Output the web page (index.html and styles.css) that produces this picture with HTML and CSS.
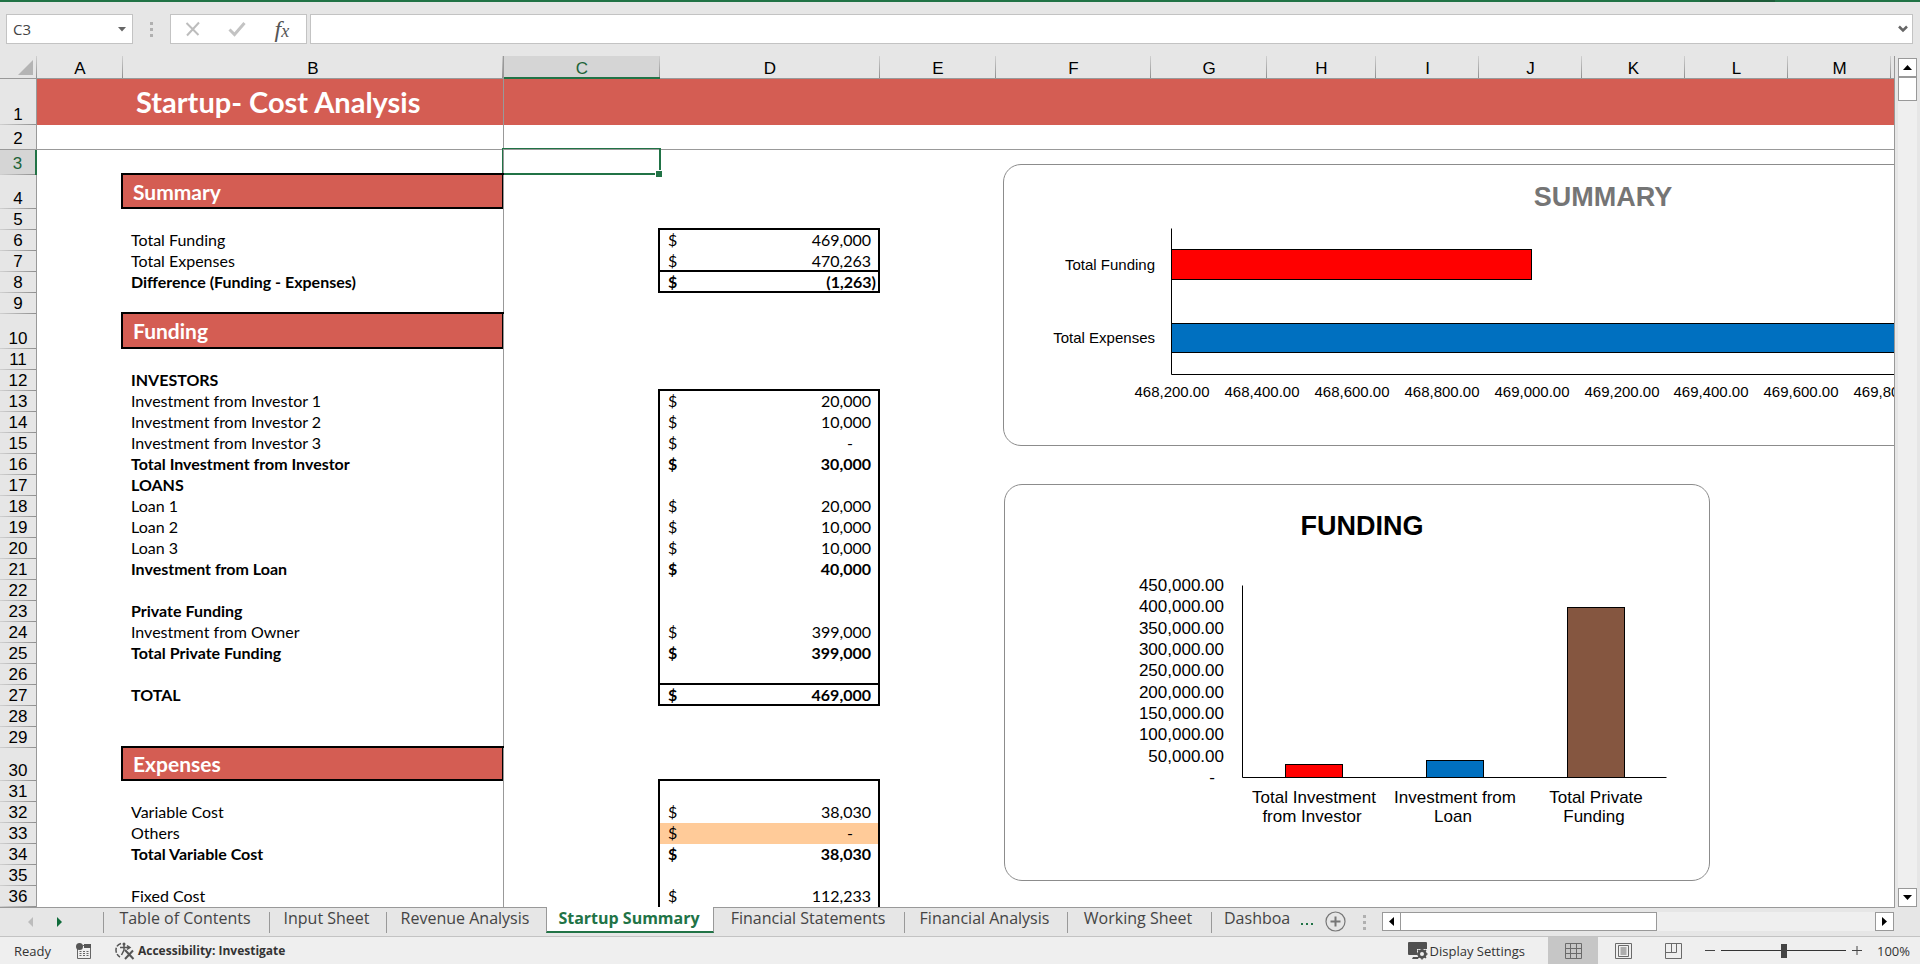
FILE: index.html
```html
<!DOCTYPE html>
<html lang="en">
<head>
<meta charset="utf-8">
<title>Startup- Cost Analysis</title>
<link rel="stylesheet" href="styles.css">
</head>
<body>
<div class="ribbon-edge"><span></span></div>

<header class="formula-bar">
  <div class="name-box">
    <input type="text" value="C3" aria-label="Name box">
    <button type="button" aria-label="Open name list"><svg width="8" height="5" viewBox="0 0 8 5"><path d="M0 0h8L4 4.500z" fill="#666"/></svg></button>
  </div>
  <span class="grip"><i></i><i></i><i></i></span>
  <div class="fx-buttons">
    <button type="button" aria-label="Cancel"><svg width="18" height="18" viewBox="0 0 18 18"><path d="M2.500 3l12 12M15 2.500L3 15.500" stroke="#bdbdbd" stroke-width="2" fill="none"/></svg></button>
    <button type="button" aria-label="Enter"><svg width="18" height="18" viewBox="0 0 18 18"><path d="M1.500 9.500l5 5L16.500 3" stroke="#c3c3c3" stroke-width="3" fill="none"/></svg></button>
    <button type="button" class="fx" aria-label="Insert function">f<small>x</small></button>
  </div>
  <div class="formula">
    <input type="text" aria-label="Formula">
    <button type="button" aria-label="Expand formula bar"><svg width="10" height="8" viewBox="0 0 10 8"><path d="M1 1.500l4 4 4-4" stroke="#666" stroke-width="2.500" fill="none"/></svg></button>
  </div>
</header>

<main class="workspace">
  <div class="sheet">
    <table class="grid">
      <colgroup><col class="w-gutter"><col class="w-a"><col class="w-b"><col class="w-c"><col class="w-d"><col class="w-e"><col class="w-f"><col class="w-e"><col class="w-h"><col class="w-i"><col class="w-i"><col class="w-i"><col class="w-i"><col class="w-i"><col></colgroup>
      <thead>
        <tr><th class="corner"><svg width="15" height="15" viewBox="0 0 15 15"><path d="M15 0v15H0z" fill="#b4b4b4"/></svg></th><th>A</th><th class="pane">B</th><th class="picked">C</th><th>D</th><th>E</th><th>F</th><th>G</th><th>H</th><th>I</th><th>J</th><th>K</th><th>L</th><th>M</th><th class="stub"></th></tr>
      </thead>
      <tbody>
        <tr class="title-row"><th>1</th><td></td><td class="title">Startup- Cost Analysis</td><td></td><td></td><td colspan="10"></td></tr>
        <tr class="tall freeze"><th>2</th><td></td><td></td><td></td><td></td><td colspan="10"></td></tr>
        <tr class="tall"><th class="picked">3</th><td></td><td></td><td class="selected"></td><td></td><td colspan="10"></td></tr>
        <tr class="head-row"><th>4</th><td></td><td class="section">Summary</td><td></td><td></td><td colspan="10"></td></tr>
        <tr><th>5</th><td></td><td></td><td></td><td></td><td colspan="10"></td></tr>
        <tr><th>6</th><td></td><td>Total Funding</td><td></td><td class="box top"><div class="money"><span>$</span><span>469,000</span></div></td><td colspan="10"></td></tr>
        <tr><th>7</th><td></td><td>Total Expenses</td><td></td><td class="box bottom"><div class="money"><span>$</span><span>470,263</span></div></td><td colspan="10"></td></tr>
        <tr class="bold"><th>8</th><td></td><td>Difference (Funding - Expenses)</td><td></td><td class="box bottom"><div class="money negative"><span>$</span><span>(1,263)</span></div></td><td colspan="10"></td></tr>
        <tr><th>9</th><td></td><td></td><td></td><td></td><td colspan="10"></td></tr>
        <tr class="head-row second"><th>10</th><td></td><td class="section">Funding</td><td></td><td></td><td colspan="10"></td></tr>
        <tr><th>11</th><td></td><td></td><td></td><td></td><td colspan="10"></td></tr>
        <tr class="bold"><th>12</th><td></td><td>INVESTORS</td><td></td><td></td><td colspan="10"></td></tr>
        <tr><th>13</th><td></td><td>Investment from Investor 1</td><td></td><td class="box top"><div class="money"><span>$</span><span>20,000</span></div></td><td colspan="10"></td></tr>
        <tr><th>14</th><td></td><td>Investment from Investor 2</td><td></td><td class="box"><div class="money"><span>$</span><span>10,000</span></div></td><td colspan="10"></td></tr>
        <tr><th>15</th><td></td><td>Investment from Investor 3</td><td></td><td class="box"><div class="money zero"><span>$</span><span>-</span></div></td><td colspan="10"></td></tr>
        <tr class="bold"><th>16</th><td></td><td>Total Investment from Investor</td><td></td><td class="box"><div class="money"><span>$</span><span>30,000</span></div></td><td colspan="10"></td></tr>
        <tr class="bold"><th>17</th><td></td><td>LOANS</td><td></td><td class="box"></td><td colspan="10"></td></tr>
        <tr><th>18</th><td></td><td>Loan 1</td><td></td><td class="box"><div class="money"><span>$</span><span>20,000</span></div></td><td colspan="10"></td></tr>
        <tr><th>19</th><td></td><td>Loan 2</td><td></td><td class="box"><div class="money"><span>$</span><span>10,000</span></div></td><td colspan="10"></td></tr>
        <tr><th>20</th><td></td><td>Loan 3</td><td></td><td class="box"><div class="money"><span>$</span><span>10,000</span></div></td><td colspan="10"></td></tr>
        <tr class="bold"><th>21</th><td></td><td>Investment from Loan</td><td></td><td class="box"><div class="money"><span>$</span><span>40,000</span></div></td><td colspan="10"></td></tr>
        <tr><th>22</th><td></td><td></td><td></td><td class="box"></td><td colspan="10"></td></tr>
        <tr class="bold"><th>23</th><td></td><td>Private Funding</td><td></td><td class="box"></td><td colspan="10"></td></tr>
        <tr><th>24</th><td></td><td>Investment from Owner</td><td></td><td class="box"><div class="money"><span>$</span><span>399,000</span></div></td><td colspan="10"></td></tr>
        <tr class="bold"><th>25</th><td></td><td>Total Private Funding</td><td></td><td class="box"><div class="money"><span>$</span><span>399,000</span></div></td><td colspan="10"></td></tr>
        <tr><th>26</th><td></td><td></td><td></td><td class="box bottom"></td><td colspan="10"></td></tr>
        <tr class="bold"><th>27</th><td></td><td>TOTAL</td><td></td><td class="box bottom"><div class="money"><span>$</span><span>469,000</span></div></td><td colspan="10"></td></tr>
        <tr><th>28</th><td></td><td></td><td></td><td></td><td colspan="10"></td></tr>
        <tr><th>29</th><td></td><td></td><td></td><td></td><td colspan="10"></td></tr>
        <tr class="head-row third"><th>30</th><td></td><td class="section">Expenses</td><td></td><td></td><td colspan="10"></td></tr>
        <tr><th>31</th><td></td><td></td><td></td><td class="box top"></td><td colspan="10"></td></tr>
        <tr><th>32</th><td></td><td>Variable Cost</td><td></td><td class="box"><div class="money"><span>$</span><span>38,030</span></div></td><td colspan="10"></td></tr>
        <tr><th>33</th><td></td><td>Others</td><td></td><td class="box flagged"><div class="money zero"><span>$</span><span>-</span></div></td><td colspan="10"></td></tr>
        <tr class="bold"><th>34</th><td></td><td>Total Variable Cost</td><td></td><td class="box"><div class="money"><span>$</span><span>38,030</span></div></td><td colspan="10"></td></tr>
        <tr><th>35</th><td></td><td></td><td></td><td class="box"></td><td colspan="10"></td></tr>
        <tr><th>36</th><td></td><td>Fixed Cost</td><td></td><td class="box"><div class="money"><span>$</span><span>112,233</span></div></td><td colspan="10"></td></tr>
      </tbody>
    </table>

    <figure class="chart chart-summary">
      <svg width="1200" height="280" viewBox="1 1 1200 280" role="img" aria-label="Summary chart">
        <text class="chart-title muted" x="600" y="42" text-anchor="middle">SUMMARY</text>
        <g class="bars">
          <rect x="168.500" y="85.500" width="360" height="30" fill="#ff0000"/>
          <rect x="168.500" y="159.500" width="928" height="29" fill="#0070c0"/>
        </g>
        <path class="axis" d="M168.500 64.500v146h990"/>
        <g class="label" text-anchor="end"><text x="152" y="106">Total Funding</text><text x="152" y="179">Total Expenses</text></g>
        <g class="label" text-anchor="middle">
          <text x="169" y="233">468,200.00</text><text x="259" y="233">468,400.00</text><text x="349" y="233">468,600.00</text><text x="439" y="233">468,800.00</text><text x="529" y="233">469,000.00</text><text x="619" y="233">469,200.00</text><text x="708" y="233">469,400.00</text><text x="798" y="233">469,600.00</text><text x="888" y="233">469,800.00</text>
        </g>
      </svg>
    </figure>

    <figure class="chart chart-funding">
      <svg width="704" height="395" viewBox="0 1 704 395" role="img" aria-label="Funding chart">
        <text class="chart-title" x="357" y="51" text-anchor="middle">FUNDING</text>
        <g class="label large" text-anchor="end">
          <text x="219" y="107">450,000.00</text><text x="219" y="128">400,000.00</text><text x="219" y="150">350,000.00</text><text x="219" y="171">300,000.00</text><text x="219" y="192">250,000.00</text><text x="219" y="214">200,000.00</text><text x="219" y="235">150,000.00</text><text x="219" y="256">100,000.00</text><text x="219" y="278">50,000.00</text><text x="210" y="299">-</text>
        </g>
        <g class="bars">
          <rect x="280.500" y="280.500" width="57" height="13" fill="#ff0000"/>
          <rect x="421.500" y="276.500" width="57" height="17" fill="#0070c0"/>
          <rect x="562.500" y="123.500" width="57" height="170" fill="#855640"/>
        </g>
        <path class="axis" d="M237.500 101.500v192h424"/>
        <g class="label large" text-anchor="middle">
          <text x="309" y="319">Total Investment</text><text x="307" y="338">from Investor</text>
          <text x="450" y="319">Investment from</text><text x="448" y="338">Loan</text>
          <text x="591" y="319">Total Private</text><text x="589" y="338">Funding</text>
        </g>
      </svg>
    </figure>
  </div>

  <div class="scroll-y">
    <button type="button" aria-label="Scroll up"><svg width="9" height="5" viewBox="0 0 9 5"><path d="M0 5h9L4.500 0z"/></svg></button>
    <div class="thumb"></div>
    <button type="button" class="last" aria-label="Scroll down"><svg width="9" height="5" viewBox="0 0 9 5"><path d="M0 0h9L4.500 5z"/></svg></button>
  </div>
</main>

<div class="tab-bar">
  <div class="tab-nav">
    <button type="button" aria-label="Previous sheets"><svg width="5" height="10" viewBox="0 0 5 10"><path d="M5 0v10L0 5z" fill="#bcbcbc"/></svg></button>
    <button type="button" aria-label="Next sheets"><svg width="5" height="10" viewBox="0 0 5 10"><path d="M0 0v10l5-5z" fill="#0f6b3a"/></svg></button>
  </div>
  <nav class="tabs">
    <a href="#contents" class="t1">Table of Contents</a>
    <a href="#input" class="t2">Input Sheet</a>
    <a href="#revenue" class="t3">Revenue Analysis</a>
    <a href="#startup" class="active">Startup Summary</a>
    <a href="#statements" class="t5">Financial Statements</a>
    <a href="#analysis" class="t6">Financial Analysis</a>
    <a href="#working" class="t7">Working Sheet</a>
    <a href="#dashboard" class="cut">Dashboa</a>
  </nav>
  <button type="button" class="more" aria-label="More sheets"><i></i><i></i><i></i></button>
  <button type="button" class="add" aria-label="New sheet"><svg width="21" height="21" viewBox="0 0 21 21"><circle cx="10.500" cy="10.500" r="9.500" fill="none" stroke="#777" stroke-width="1.200"/><path d="M10.500 5.500v10M5.500 10.500h10" stroke="#777" stroke-width="2"/></svg></button>
  <span class="grip"><i></i><i></i><i></i></span>
  <div class="scroll-x">
    <button type="button" aria-label="Scroll left"><svg width="5" height="9" viewBox="0 0 5 9"><path d="M5 0v9L0 4.500z"/></svg></button>
    <div class="thumb"></div>
    <button type="button" class="last" aria-label="Scroll right"><svg width="5" height="9" viewBox="0 0 5 9"><path d="M0 0v9l5-4.500z"/></svg></button>
  </div>
</div>

<footer class="status">
  <span class="ready">Ready</span>
  <button type="button" class="macro" aria-label="Record macro"><svg width="16" height="16" viewBox="0 0 16 16"><path d="M1.500 6v9.500h13V2.500H7" fill="none" stroke="#666"/><path d="M8 1h7v4H8z" fill="#555"/><circle cx="3.500" cy="3.500" r="3.500" fill="#555"/><path d="M3.500 8.500h2m1.500 0h2m1.500 0h2M3.500 10.500h2m1.500 0h2m1.500 0h2M3.500 12.500h2m1.500 0h2m1.500 0h2" stroke="#666"/></svg></button>
  <button type="button" class="access"><svg width="20" height="18" viewBox="0 0 20 18"><path d="M6 1.500C-.5 3-.5 12 5 15" fill="none" stroke="#555" stroke-width="1.500" stroke-dasharray="5 1.500"/><circle cx="9" cy="2" r="1.500" fill="#555"/><path d="M5 5.500h9M9 3v5l-2.500 5M12 3.500l3 2-3 2" fill="none" stroke="#555" stroke-width="1.500"/><path d="M10 8l8.500 9M18 8.500L10 17" stroke="#555" stroke-width="2"/></svg>Accessibility: Investigate</button>
  <button type="button" class="display"><svg width="20" height="19" viewBox="0 0 20 19"><path d="M1 1h17a1 1 0 0 1 1 1v6H9v6H1a1 1 0 0 1-1-1V2a1 1 0 0 1 1-1z" fill="#505050"/><path d="M5 16h5v2H4z" fill="#505050"/><circle cx="14" cy="13" r="3.500" fill="none" stroke="#505050" stroke-width="2.500"/><path d="M14 7.500v11M8.500 13h11M10 9l8 8M18 9l-8 8" stroke="#505050" stroke-width="1.500"/><circle cx="14" cy="13" r="2" fill="#efefef"/></svg>Display Settings</button>
  <div class="views">
    <button type="button" class="on" aria-label="Normal view"><svg width="17" height="16" viewBox="0 0 17 16"><path d="M.5.5h16v15H.5zM5.500.5v15M11.500.5v15M.5 5.500h16M.5 10.500h16" fill="none" stroke="#6a6a6a"/></svg></button>
    <button type="button" aria-label="Page layout"><svg width="17" height="16" viewBox="0 0 17 16"><path d="M.5.5h16v15H.5zM3.500 2.500h10v11h-10zM5.500 5h6M5.500 7h6M5.500 9h6M5.500 11h6" fill="none" stroke="#6a6a6a"/></svg></button>
    <button type="button" aria-label="Page break preview"><svg width="17" height="16" viewBox="0 0 17 16"><path d="M.5.5h16v15H.5zM6.500.5v9M.5 9.500h11V.5" fill="none" stroke="#6a6a6a"/></svg></button>
  </div>
  <button type="button" class="zoom-step" aria-label="Zoom out"><svg width="10" height="10" viewBox="0 0 10 10"><path d="M0 4.500h10" stroke="#444"/></svg></button>
  <input type="range" class="zoom" min="0" max="100" value="50" aria-label="Zoom">
  <button type="button" class="zoom-step" aria-label="Zoom in"><svg width="10" height="10" viewBox="0 0 10 10"><path d="M0 4.500h10M5 0v9" stroke="#444"/></svg></button>
  <span class="percent">100%</span>
</footer>
</body>
</html>
```

FILE: styles.css
```css
* { box-sizing: border-box; }

body {
  margin: 0;
  height: 100vh;
  display: flex;
  flex-direction: column;
  overflow: hidden;
  background: #e6e6e6;
  color: #000;
  font-family: "Open Sans", "Noto Sans", sans-serif;
}

button {
  margin: 0;
  padding: 0;
  border: 0;
  background: none;
  color: inherit;
  font: inherit;
  display: flex;
  align-items: center;
  justify-content: center;
}

input { font: inherit; color: inherit; }

/* Formula bar */
.ribbon-edge {
  height: 2px;
  background: #217346;
  display: flex;
  justify-content: flex-end;
  padding-right: 145px;
  flex: none;
}
.ribbon-edge span { width: 75px; background: #1d5c39; }

.formula-bar {
  flex: none;
  height: 54px;
  padding: 12px 7px 12px 6px;
  display: flex;
}
.name-box, .fx-buttons, .formula {
  display: flex;
  align-items: center;
  background: #fff;
  border: 1px solid #c3c3c3;
}
.name-box { width: 127px; padding-right: 6px; }
.name-box input, .formula input {
  flex: 1;
  min-width: 0;
  border: 0;
  outline: 0;
  padding: 0 0 0 6px;
  background: none;
  font-size: 15px;
  color: #444;
}
.grip {
  width: 37px;
  display: flex;
  flex-direction: column;
  align-items: center;
  justify-content: center;
  gap: 3px;
}
.grip i { width: 3px; height: 3px; background: #b0b0b0; }
.fx-buttons { width: 137px; padding-right: 2px; margin-right: 3px; }
.fx-buttons button { flex: 1; }
.fx-buttons .fx {
  font: italic 24px "Liberation Serif", serif;
  color: #555;
  align-items: baseline;
}
.fx small { font-size: 18px; }
.formula { flex: 1; padding-right: 4px; }

/* Sheet */
.workspace { flex: 1; min-height: 0; display: flex; padding-right: 3px; gap: 3px; }
.sheet {
  flex: 1;
  min-width: 0;
  position: relative;
  overflow: hidden;
  background: #fff;
  border-right: 1px solid #999;
}

.grid {
  width: 100%;
  table-layout: fixed;
  border-collapse: separate;
  border-spacing: 0;
  font: 16px/20px Lato, sans-serif;
}
.w-gutter { width: 37px; }
.w-a { width: 86px; }
.w-b { width: 381px; }
.w-c { width: 156px; }
.w-d { width: 220px; }
.w-e { width: 116px; }
.w-f { width: 155px; }
.w-h { width: 109px; }
.w-i { width: 103px; }

.grid th {
  padding: 0;
  font: 17px/20px "Liberation Sans", Arial, sans-serif;
  vertical-align: bottom;
  text-align: center;
}
.grid thead th {
  height: 23px;
  line-height: 18px;
  border-bottom: 1px solid #999;
  background: linear-gradient(#d0d0d0, #8f8f8f) right / 1px 100% no-repeat #e6e6e6;
}
.grid thead th.pane { border-right: 1px solid #999; }
.grid thead th.picked { background-color: #d5d5d5; color: #1e6439; border-bottom: 2px solid #217346; line-height: 16px; }
.grid thead .corner { padding: 0 4px 3px; text-align: right; }
.corner svg { display: block; margin-left: auto; }
.grid thead .stub { background: #e6e6e6; }

.grid tbody th {
  border-right: 1px solid #999;
  background: linear-gradient(90deg, #d0d0d0, #8f8f8f) bottom / 100% 1px no-repeat #e6e6e6;
}
.grid tbody th.picked { background-color: #d5d5d5; color: #1e6439; border-right: 2px solid #217346; }
.grid tbody tr { height: 21px; }
.grid td { padding: 0 0 1px; vertical-align: bottom; white-space: nowrap; position: relative; }
.grid td:nth-child(3) { padding-left: 8px; border-right: 1px solid #999; }
.grid .bold td { font-weight: 700; }

.grid .title-row { height: 46px; }
.grid .title-row td { background: #d45d53; vertical-align: middle; }
.grid .title-row .title { padding-left: 13px; color: #fff; font-size: 29px; line-height: 36px; font-weight: 700; }
.grid .tall { height: 25px; }
.grid .tall th { padding-bottom: 1px; }
.grid .freeze td { border-bottom: 1px solid #999; }
.grid .freeze th { background-image: linear-gradient(#999, #999); }
.grid .head-row { height: 34px; }
.grid .head-row.second { height: 35px; }
.grid .head-row.third { height: 33px; }
.grid td.section {
  padding-left: 10px;
  vertical-align: middle;
  background: #d45d53;
  color: #fff;
  font-size: 21px;
  line-height: 28px;
  font-weight: 700;
  box-shadow: -2px -2px #000, 0 -2px #000, -2px 0 #000, inset -1px -2px #000;
}

.box { box-shadow: -2px 0 #000, inset -2px 0 #000; }
.box.top { box-shadow: -2px -2px #000, 0 -2px #000, -2px 0 #000, inset -2px 0 #000; }
.box.bottom { box-shadow: -2px 0 #000, inset -2px -2px #000; }
.box.flagged { background: #ffcb99; }
.money { display: flex; justify-content: space-between; padding: 0 9px 0 8px; }
.money.negative { padding-right: 4px; }
.money.zero { padding-right: 27px; }

/* Active cell outline with its fill handle */
.selected::before {
  content: "";
  position: absolute;
  inset: -2px -1px 0 -2px;
  border: solid #217346;
  border-width: 1px 2px 2px 1px;
}
.selected::after {
  content: "";
  position: absolute;
  right: -2px;
  bottom: -2px;
  width: 6px;
  height: 6px;
  background: #217346;
  border: solid #fff;
  border-width: 1px 0 0 1px;
}

/* Floating charts */
.chart {
  position: absolute;
  margin: 0;
  background: #fff;
  border: 1px solid #8c8c8c;
  border-radius: 18px;
}
.chart svg { display: block; }
.chart-summary { left: 1003px; top: 108px; }
.chart-funding { left: 1004px; top: 428px; }
.chart text { font-family: "Liberation Sans", Arial, sans-serif; }
.chart .chart-title { font-size: 27px; font-weight: 700; }
.chart .muted { fill: #757575; }
.chart .label { font-size: 15px; }
.chart .label.large { font-size: 17px; }
.bars rect { stroke: #000; }
.axis { fill: none; stroke: #000; }

/* Scrollbars */
.scroll-y, .scroll-x { display: flex; background: #efefef; }
.scroll-y { flex-direction: column; width: 19px; margin-top: 2px; }
.scroll-y button, .scroll-x button, .thumb { background: #fff; border: 1px solid #999; flex: none; }
.scroll-y button, .scroll-x button { width: 19px; height: 19px; }
.scroll-y .thumb { height: 24px; }
.scroll-y .last { margin-top: auto; }
.scroll-x { width: 512px; height: 19px; flex: none; }
.scroll-x .thumb { width: 256px; border-left: 0; }
.scroll-x .last { margin-left: auto; }

/* Sheet tabs */
.tab-bar {
  flex: none;
  height: 30px;
  display: flex;
  padding-right: 26px;
  border-bottom: 1px solid #c3c3c3;
  background: linear-gradient(#999, #999) left top / calc(100% - 25px) 1px no-repeat;
}
.tab-nav { width: 103px; display: flex; align-items: center; padding-left: 28px; gap: 24px; flex: none; }
.tabs { flex: 1; min-width: 0; display: flex; overflow: hidden; font-size: 16px; line-height: 22px; }
.tabs a {
  flex: none;
  height: 26px;
  padding-right: 2px;
  color: #444;
  text-decoration: none;
  text-align: center;
  white-space: nowrap;
  background: linear-gradient(#999, #999) left 5px / 1px 21px no-repeat;
}
.tabs .t1 { width: 166px; }
.tabs .t2 { width: 117px; }
.tabs .t3 { width: 160px; }
.tabs .t5 { width: 190px; background-image: none; }
.tabs .t6 { width: 163px; }
.tabs .t7 { width: 144px; }
.tabs .cut { padding-left: 13px; }
.tabs .active {
  width: 168px;
  background: #fff;
  color: #217346;
  font-weight: 700;
  border: solid #999;
  border-width: 0 1px;
  border-bottom: 2px solid #217346;
}
.more { gap: 3px; width: 14px; flex: none; margin-right: 11px; padding-top: 4px; }
.more i { width: 2px; height: 2px; background: #217346; }
.add { flex: none; }
.tab-bar .grip { width: 36px; padding-top: 2px; flex: none; }
.scroll-x { align-self: center; }

/* Status bar */
.status {
  flex: none;
  height: 27px;
  display: flex;
  align-items: center;
  padding: 0 10px 0 14px;
  background: #efefef;
  color: #333;
  font-size: 13px;
}
.ready { width: 62px; }
.macro { margin-right: 23px; }
.access { font-weight: 700; font-size: 12px; gap: 3px; }
.display { margin-left: auto; margin-right: 23px; gap: 2px; }
.views { display: flex; align-self: stretch; margin-right: 7px; }
.views button { width: 50px; }
.views .on { background: #c6c6c6; }
.zoom {
  appearance: none;
  width: 125px;
  height: 14px;
  margin: 0 6px;
  background: linear-gradient(#333, #333) center / 100% 1px no-repeat;
}
.zoom::-webkit-slider-thumb { appearance: none; width: 6px; height: 14px; background: #444; }
.percent { width: 48px; text-align: right; }
```
